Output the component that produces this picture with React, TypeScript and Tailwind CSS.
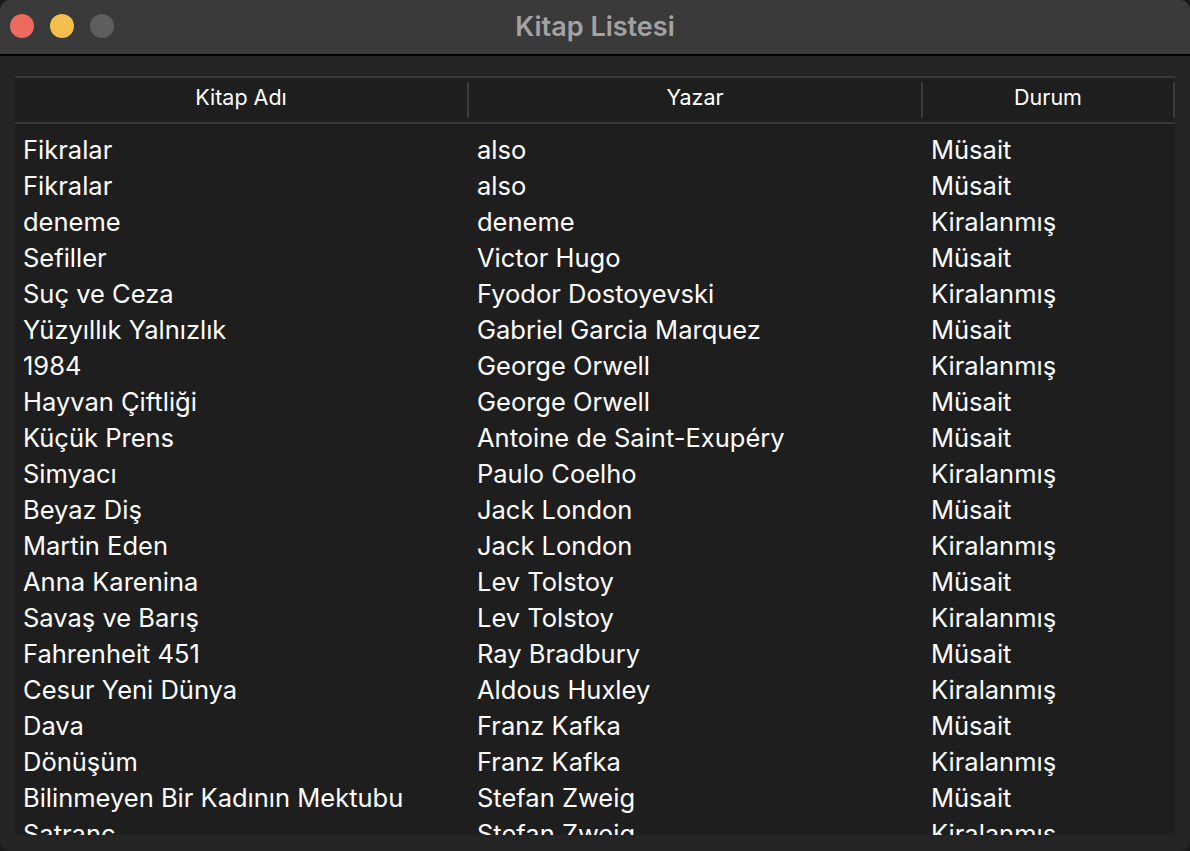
const books: [string, string, string][] = [
  ["Fikralar", "also", "Müsait"],
  ["Fikralar", "also", "Müsait"],
  ["deneme", "deneme", "Kiralanmış"],
  ["Sefiller", "Victor Hugo", "Müsait"],
  ["Suç ve Ceza", "Fyodor Dostoyevski", "Kiralanmış"],
  ["Yüzyıllık Yalnızlık", "Gabriel Garcia Marquez", "Müsait"],
  ["1984", "George Orwell", "Kiralanmış"],
  ["Hayvan Çiftliği", "George Orwell", "Müsait"],
  ["Küçük Prens", "Antoine de Saint-Exupéry", "Müsait"],
  ["Simyacı", "Paulo Coelho", "Kiralanmış"],
  ["Beyaz Diş", "Jack London", "Müsait"],
  ["Martin Eden", "Jack London", "Kiralanmış"],
  ["Anna Karenina", "Lev Tolstoy", "Müsait"],
  ["Savaş ve Barış", "Lev Tolstoy", "Kiralanmış"],
  ["Fahrenheit 451", "Ray Bradbury", "Müsait"],
  ["Cesur Yeni Dünya", "Aldous Huxley", "Kiralanmış"],
  ["Dava", "Franz Kafka", "Müsait"],
  ["Dönüşüm", "Franz Kafka", "Kiralanmış"],
  ["Bilinmeyen Bir Kadının Mektubu", "Stefan Zweig", "Müsait"],
  ["Satranç", "Stefan Zweig", "Kiralanmış"],
];

const App = () => {
  return (
    <div className="h-[851px] w-[1190px] bg-[#1a1a1a] font-['Inter',sans-serif]">
      <div className="flex h-full flex-col overflow-hidden rounded-[10px] bg-[#242424]">
        {/* title bar */}
        <div className="relative flex h-[56px] shrink-0 items-center justify-center border-b-2 border-black bg-[#3b3a3b]">
          <div className="absolute left-[10px] top-[14px] flex gap-4">
            <div className="h-6 w-6 rounded-full bg-[#ec6a5e]" />
            <div className="h-6 w-6 rounded-full bg-[#f4bf4f]" />
            <div className="h-6 w-6 rounded-full bg-[#5e5d60]" />
          </div>
          <span className="text-[27px] font-semibold text-[#a3a2a3]">Kitap Listesi</span>
        </div>

        {/* table */}
        <div className="min-h-0 flex-1 px-[15px] pt-5 pb-4">
          <div className="flex h-full flex-col overflow-hidden bg-[#1e1e1e]">
            <div className="flex h-12 shrink-0 items-center border-y-2 border-[#393939] text-[21.5px] text-white">
              <div className="flex h-full w-[452px] items-center justify-center pb-[5px]">Kitap Adı</div>
              <div className="h-9 w-[2px] bg-[#3a3a3a]" />
              <div className="flex h-full w-[452px] items-center justify-center pb-[5px]">Yazar</div>
              <div className="h-9 w-[2px] bg-[#3a3a3a]" />
              <div className="flex h-full w-[250px] items-center justify-center pb-[5px]">Durum</div>
              <div className="h-9 w-[2px] bg-[#3a3a3a]" />
            </div>
            <div className="min-h-0 flex-1 overflow-hidden pt-2">
              {books.map(([title, author, status], i) => (
                <div key={i} className="flex h-9 items-center text-[25.5px] text-white">
                  <div className="w-[454px] pl-[8px]">{title}</div>
                  <div className="w-[454px] pl-[8px]">{author}</div>
                  <div className="pl-[8px]">{status}</div>
                </div>
              ))}
            </div>
          </div>
        </div>
      </div>
    </div>
  );
};

export default App;
